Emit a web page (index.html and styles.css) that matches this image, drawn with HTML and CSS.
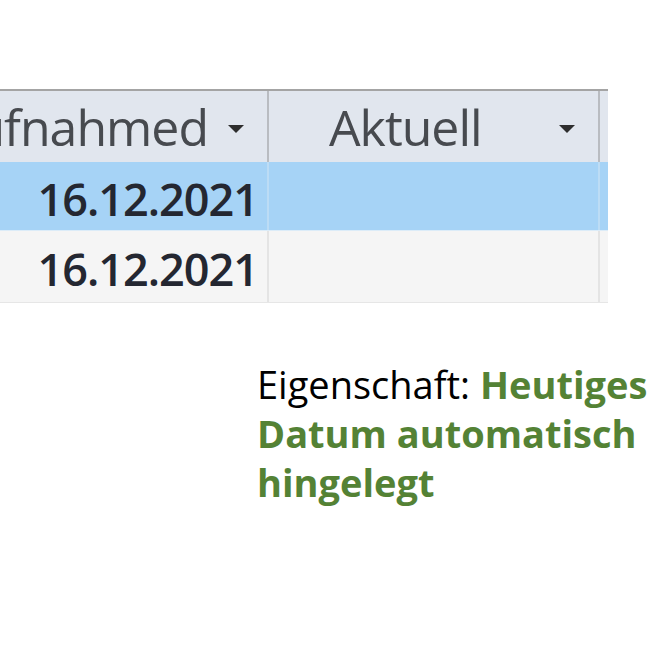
FILE: index.html
```html
<!DOCTYPE html>
<html lang="de">
<head>
    <meta charset="UTF-8">
    <meta name="viewport" content="width=device-width, initial-scale=1.0">
    <title>Aufnahmedatum</title>
    <link rel="stylesheet" href="styles.css">
</head>
<body>

<div class="sheet">
    <div class="sheet-row sheet-head">
        <div class="cell col-date">
            <span class="head-label">Aufnahmed</span>
            <span class="drop"></span>
        </div>
        <div class="cell col-current">
            <span class="head-label">Aktuell</span>
            <span class="drop"></span>
        </div>
        <div class="cell col-rest"></div>
    </div>
    <div class="sheet-row sheet-selected">
        <div class="cell col-date">16.12.2021</div>
        <div class="cell col-current"></div>
        <div class="cell col-rest"></div>
    </div>
    <div class="sheet-row">
        <div class="cell col-date">16.12.2021</div>
        <div class="cell col-current"></div>
        <div class="cell col-rest"></div>
    </div>
</div>

<p class="note">
    Eigenschaft: <strong>Heutiges</strong><br>
    <strong>Datum automatisch</strong><br>
    <strong>hingelegt</strong>
</p>

</body>
</html>
```

FILE: styles.css
```css
body {
    margin: 0;
    background: #fff;
    overflow: hidden;
}
.sheet {
    width: 608px;
    margin-top: 89px;
    border-top: 2px solid #a4a4a4;
    font-family: "Open Sans", Arial, sans-serif;
}
.sheet-row {
    display: flex;
    height: 71px;
    background: #f5f5f5;
    border-bottom: 1px solid #e6e6e6;
}
.sheet-head {
    background: #e1e6ee;
    border-bottom: none;
}
.sheet-selected {
    height: 68px;
    background: #a6d3f6;
    border-bottom: 1px solid #dcecf8;
}
.cell {
    display: flex;
    align-items: center;
    box-sizing: border-box;
    border-right: 2px solid #e4e4e4;
}
.sheet-head .cell {
    border-right-color: #b9bcc1;
}
.sheet-selected .cell {
    border-right-color: #bcdcf5;
}
.col-date {
    width: 269px;
    justify-content: flex-end;
    padding: 4px 9px 0 0;
    font-size: 45px;
    font-weight: 600;
    color: #242731;
    letter-spacing: -1px;
}
.sheet-head .col-date {
    padding: 0;
}
.col-current {
    width: 331px;
    padding-left: 60px;
}
.col-rest {
    width: 8px;
    border-right: none;
}
.head-label {
    font-size: 50px;
    font-weight: 400;
    color: #474a4f;
    letter-spacing: -1px;
    white-space: nowrap;
}
.col-date .head-label {
    margin-right: 20px;
}
.col-current .head-label {
    flex: 1;
}
.drop {
    width: 0;
    height: 0;
    border-left: 8px solid transparent;
    border-right: 8px solid transparent;
    border-top: 8px solid #2e2e2e;
    margin: 4px 23px 0 0;
}
.note {
    margin: 57px 0 0 257px;
    font-family: "Open Sans", Lato, sans-serif;
    font-size: 38px;
    line-height: 49px;
    color: #000;
}
.note strong {
    font-weight: 700;
    color: #548235;
}
```
